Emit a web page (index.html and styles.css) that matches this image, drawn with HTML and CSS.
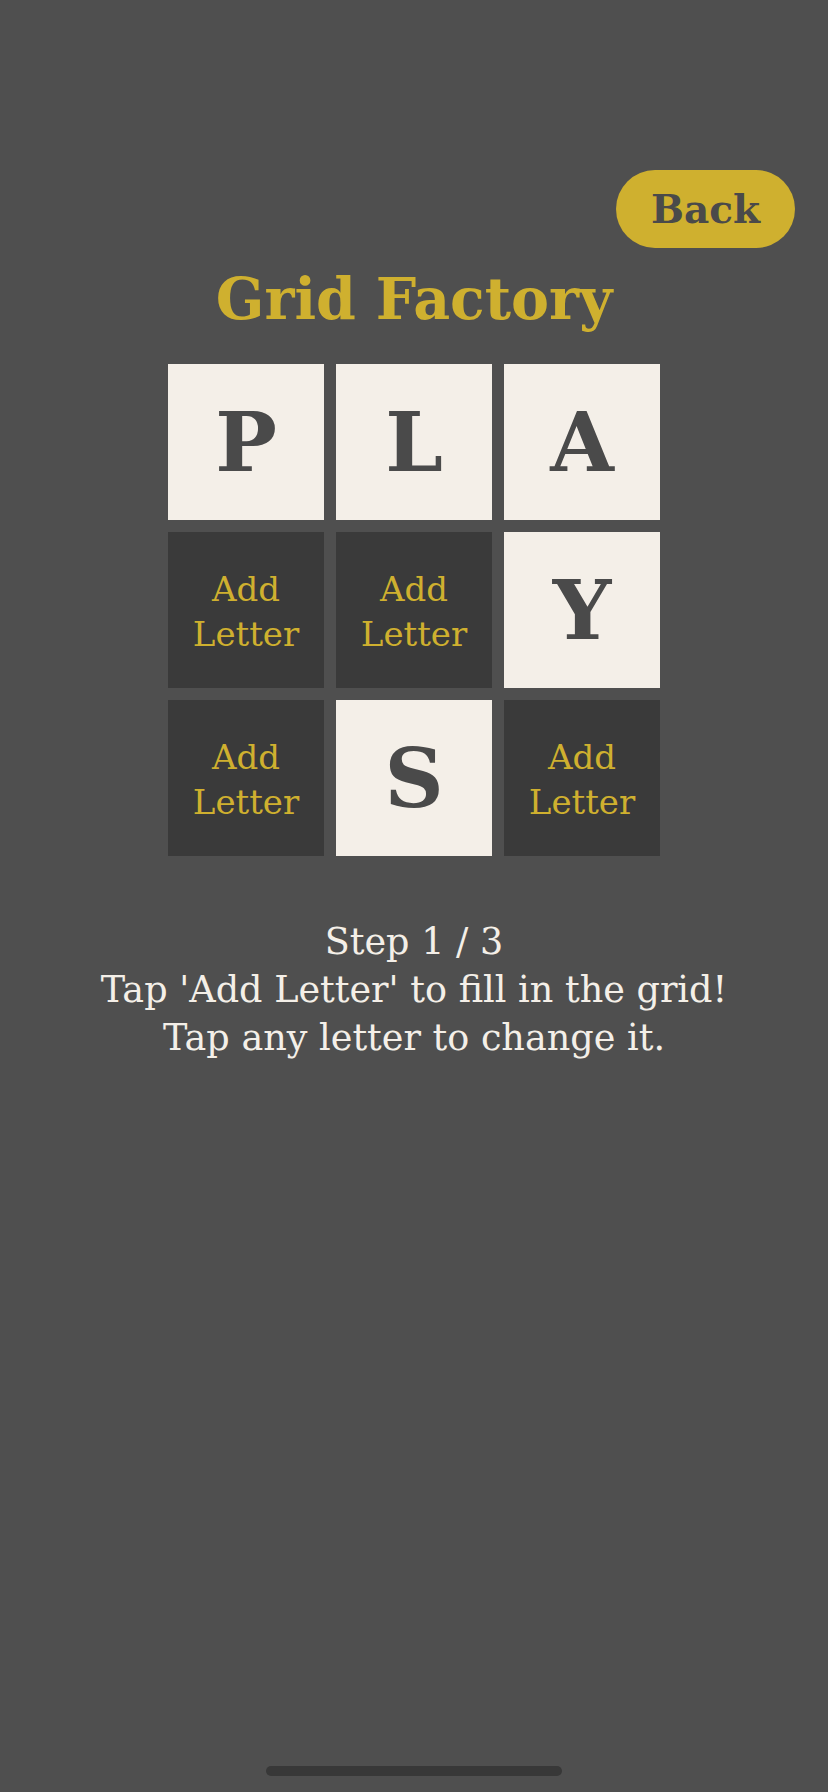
FILE: index.html
```html
<!DOCTYPE html>
<html lang="en">
<head>
<meta charset="utf-8">
<title>Grid Factory</title>
<link rel="stylesheet" href="styles.css">
</head>
<body>
<div class="screen">
  <header class="topbar">
    <button class="back-btn">Back</button>
  </header>
  <h1 class="title">Grid Factory</h1>
  <div class="grid">
    <div class="tile filled">P</div>
    <div class="tile filled">L</div>
    <div class="tile filled">A</div>
    <div class="tile empty">Add<br>Letter</div>
    <div class="tile empty">Add<br>Letter</div>
    <div class="tile filled">Y</div>
    <div class="tile empty">Add<br>Letter</div>
    <div class="tile filled">S</div>
    <div class="tile empty">Add<br>Letter</div>
  </div>
  <p class="instructions">Step 1 / 3<br>Tap 'Add Letter' to fill in the grid!<br>Tap any letter to change it.</p>
  <div class="home-indicator"></div>
</div>
</body>
</html>
```

FILE: styles.css
```css
html, body {
  margin: 0;
  padding: 0;
  background: #4f4f4f;
}

.screen {
  min-height: 1792px;
  display: flex;
  flex-direction: column;
  align-items: center;
  font-family: "DejaVu Serif", "Liberation Serif", serif;
}

.topbar {
  align-self: stretch;
  display: flex;
  justify-content: flex-end;
  padding: 170px 33px 0 0;
}

.back-btn {
  width: 179px;
  height: 78px;
  border: none;
  border-radius: 39px;
  background: #cfb02f;
  color: #4a4a4a;
  font-family: "DejaVu Serif", serif;
  font-weight: bold;
  font-size: 39px;
  line-height: 1;
  padding: 0;
  display: flex;
  align-items: center;
  justify-content: center;
}

.title {
  margin: 22px 0 0;
  font-size: 57px;
  line-height: 57px;
  font-weight: bold;
  color: #cfb02f;
}

.grid {
  margin-top: 37px;
  display: grid;
  grid-template-columns: repeat(3, 156px);
  grid-auto-rows: 156px;
  gap: 12px;
}

.tile {
  display: flex;
  align-items: center;
  justify-content: center;
  text-align: center;
}

.tile.filled {
  background: #f4efe8;
  color: #4a4a4a;
  font-weight: bold;
  font-size: 82px;
  line-height: 1;
}

.tile.empty {
  background: #3a3a3a;
  color: #cfb02f;
  font-size: 34px;
  line-height: 45px;
  padding-top: 3px;
  box-sizing: border-box;
}

.instructions {
  margin: 62px 0 0;
  text-align: center;
  color: #f4efe8;
  font-size: 36.6px;
  line-height: 48px;
}

.home-indicator {
  margin-top: auto;
  margin-bottom: 16px;
  width: 296px;
  height: 10px;
  border-radius: 5px;
  background: #383838;
}
```
